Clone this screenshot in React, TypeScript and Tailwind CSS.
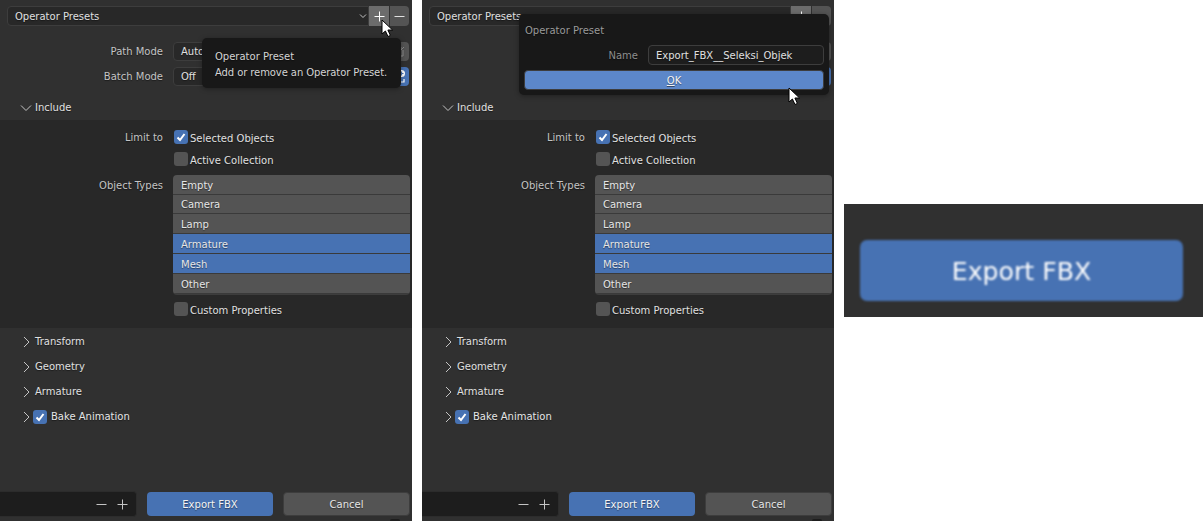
import React from "react";

const objectTypes = [
  { label: "Empty", on: false, cls: "h-[20px] pt-[3px]" },
  { label: "Camera", on: false, cls: "h-[19px] pt-[1px]" },
  { label: "Lamp", on: false, cls: "h-[20px] pt-[3px]" },
  { label: "Armature", on: true, cls: "h-[20px] pt-[3px]" },
  { label: "Mesh", on: true, cls: "h-[20px] pt-[3px]" },
  { label: "Other", on: false, cls: "h-[20px] pt-[3px]" },
];

function Chevron({ down = false, small = false }: { down?: boolean; small?: boolean }) {
  if (small) {
    return (
      <svg width="8" height="6" viewBox="0 0 8 6" fill="none" stroke="#c4c4c4" strokeWidth="1">
        <path d="M1 1.5 L4 4.5 L7 1.5" />
      </svg>
    );
  }
  if (down) {
    return (
      <svg width="12" height="8" viewBox="0 0 12 8" fill="none" stroke="#c4c4c4" strokeWidth="1">
        <path d="M1 1.5 L6 6.5 L11 1.5" />
      </svg>
    );
  }
  return (
    <svg width="7" height="12" viewBox="0 0 7 12" fill="none" stroke="#c4c4c4" strokeWidth="1">
      <path d="M1 1 L6 6 L1 11" />
    </svg>
  );
}

function Check({ on }: { on: boolean }) {
  return (
    <span
      className={`flex h-[14px] w-[14px] shrink-0 items-center justify-center rounded-[3px] ${
        on ? "bg-[#4772b3]" : "bg-[#545454]"
      }`}
    >
      {on && (
        <svg width="12" height="12" viewBox="0 0 12 12" fill="none" stroke="#ffffff" strokeWidth="2">
          <path d="M2.5 6.5 L5 9 L9.5 3" />
        </svg>
      )}
    </span>
  );
}

function Cursor({ className }: { className: string }) {
  return (
    <svg className={className} width="13" height="19" viewBox="0 0 13 19">
      <path d="M1 1 L1 15 L4.4 12 L7 17.5 L9.4 16.4 L6.9 11 L11.6 11 Z" fill="#ffffff" stroke="#000000" strokeWidth="1" />
    </svg>
  );
}

function Sign({ plus = false, color = "#c4c4c4" }: { plus?: boolean; color?: string }) {
  return (
    <svg width="11" height="11" viewBox="0 0 11 11" stroke={color} strokeWidth="1">
      <path d="M0.5 5.5 H10.5" />
      {plus && <path d="M5.5 0.5 V10.5" />}
    </svg>
  );
}

function PropRow({ label, value, children, className }: { label: string; value: string; children: React.ReactNode; className: string }) {
  return (
    <div className={`flex h-[19px] items-center ${className}`}>
      <span className="w-[163px] pt-[1px] text-right text-[#c4c4c4]">{label}</span>
      <div className="ml-[10px] flex h-[19px] w-[212px] items-center rounded-[4px] border border-[#3d3d3d] bg-[#282828] pl-[7px] pt-[1px] text-[#e0e0e0]">
        {value}
      </div>
      {children}
    </div>
  );
}

function CheckRow({ label, on, className }: { label: string; on: boolean; className: string }) {
  return (
    <div className={`flex h-[20px] items-center pl-[174px] ${className}`}>
      <Check on={on} />
      <span className="ml-[2px] pt-[3px] text-[#e0e0e0]">{label}</span>
    </div>
  );
}

function Panel({ overlay }: { overlay: React.ReactNode }) {
  return (
    <div className="relative flex h-[521px] w-[412px] shrink-0 flex-col overflow-hidden bg-[#303030] text-[10px] leading-none [text-shadow:0_1px_1px_rgba(0,0,0,0.45)]">
      <div className="mt-[6px] flex h-[20px] pl-[7px] pr-[3px]">
        <div className="flex w-[362px] items-center justify-between rounded-l-[4px] border border-[#3d3d3d] bg-[#282828] pl-[7px] pr-[1px] text-[#e0e0e0]">
          <span className="pt-[2px]">Operator Presets</span>
          <Chevron small />
        </div>
        <div className="flex w-[20px] items-center justify-center bg-[#6c6c6c]">
          <Sign plus color="#ffffff" />
        </div>
        <div className="ml-[1px] flex w-[19px] items-center justify-center rounded-r-[4px] bg-[#545454]">
          <Sign color="#e0e0e0" />
        </div>
      </div>

      <PropRow label="Path Mode" value="Auto" className="mt-[16px]">
        <div className="ml-[5px] flex h-[19px] w-[19px] items-center justify-center rounded-[4px] bg-[#545454]">
          <svg width="11" height="11" viewBox="0 0 11 11" fill="none" stroke="#8c8c8c" strokeWidth="1">
            <path d="M1 2 H8 M1 2 V10 H9 V4 M3 8 L10 1" />
          </svg>
        </div>
      </PropRow>
      <PropRow label="Batch Mode" value="Off" className="mt-[6px]">
        <div className="ml-[5px] flex h-[19px] w-[19px] items-center justify-center rounded-[4px] bg-[#4772b3]">
          <svg width="15" height="15" viewBox="0 0 15 15" fill="none" stroke="#ffffff" strokeWidth="1.2">
            <path d="M3 6 V13 H12 V10" />
            <circle cx="9.5" cy="4.5" r="3.5" fill="#ffffff" stroke="none" />
            <path d="M7.5 4.5 H11.5 M9.5 2.5 V6.5" stroke="#4772b3" />
          </svg>
        </div>
      </PropRow>

      <div className="mt-[10px] flex h-[24px] items-center">
        <span className="ml-[20px] flex w-[15px]">
          <Chevron down />
        </span>
        <span className="text-[#e0e0e0]">Include</span>
      </div>

      <div className="flex h-[208px] flex-col bg-[#282828] pt-[7px]">
        <div className="relative">
          <span className="absolute right-[249px] top-[6px] text-[#c4c4c4]">Limit to</span>
          <CheckRow label="Selected Objects" on={true} className="" />
        </div>
        <CheckRow label="Active Collection" on={false} className="mt-[2px]" />
        <div className="mt-[6px] flex">
          <span className="mt-[6px] w-[163px] text-right text-[#c4c4c4]">Object Types</span>
          <div className="ml-[10px] flex w-[237px] flex-col overflow-hidden rounded-[4px] border-b border-[#3d3d3d]">
            {objectTypes.map((t) => (
              <div
                key={t.label}
                className={`flex ${t.cls} items-center border-b border-[#3a3a3a] pl-[8px] text-[#e6e6e6] ${
                  t.on ? "bg-[#4772b3]" : "bg-[#545454]"
                }`}
              >
                {t.label}
              </div>
            ))}
          </div>
        </div>
        <CheckRow label="Custom Properties" on={false} className="mt-[4px]" />
      </div>

      <div className="flex flex-col pt-[1px]">
        {["Transform", "Geometry", "Armature"].map((name) => (
          <div key={name} className="flex h-[25px] items-center pl-[23px]">
            <span className="flex w-[12px]">
              <Chevron />
            </span>
            <span className="text-[#e0e0e0]">{name}</span>
          </div>
        ))}
        <div className="flex h-[25px] items-center pl-[23px]">
          <span className="flex w-[10px]">
            <Chevron />
          </span>
          <Check on={true} />
          <span className="ml-[4px] text-[#e6e6e6]">Bake Animation</span>
        </div>
      </div>

      <div className="mb-[4px] mt-auto flex h-[26px]">
        <div className="flex w-[137px] items-center justify-end gap-[10px] rounded-r-[4px] border-y border-r border-[#2c2c2c] bg-[#1d1d1d] pr-[8px]">
          <Sign />
          <Sign plus />
        </div>
        <div className="ml-[10px] mt-[1px] flex h-[24px] w-[126px] items-center justify-center rounded-[4px] bg-[#4772b3] pt-[2px] text-[#f4f4f4]">
          Export FBX
        </div>
        <div className="ml-[10px] mt-[1px] flex h-[24px] w-[127px] items-center justify-center rounded-[4px] border border-[#3d3d3d] bg-[#545454] pt-[2px] text-[#e6e6e6]">
          Cancel
        </div>
      </div>
      <div className="absolute bottom-0 left-[390px] h-[2px] w-[10px] rounded-t-[3px] bg-[#1d1d1d]" />
      {overlay}
    </div>
  );
}

export default function App() {
  return (
    <div className="flex h-[521px] w-[1203px] overflow-hidden bg-white font-['DejaVu_Sans',sans-serif]">
      <Panel
        overlay={
          <>
            <div className="absolute left-[202px] top-[38px] h-[50px] w-[199px] rounded-[5px] bg-[#181818] pl-[13px] pt-[14px] text-[#d4d4d4] shadow-[0_1px_5px_rgba(0,0,0,0.35)]">
              <div>Operator Preset</div>
              <div className="mt-[6px] tracking-[-0.09px]">Add or remove an Operator Preset.</div>
            </div>
            <Cursor className="absolute left-[381px] top-[19px]" />
          </>
        }
      />
      <div className="w-[10px] shrink-0" />
      <Panel
        overlay={
          <>
            <div className="absolute left-[97px] top-[14px] h-[81px] w-[310px] rounded-[5px] bg-[#181818] pl-[6px] pt-[12px] shadow-[0_1px_5px_rgba(0,0,0,0.35)]">
              <div className="text-[#9a9a9a]">Operator Preset</div>
              <div className="mt-[9px] flex h-[20px] items-center">
                <span className="w-[113px] pt-[2px] text-right text-[#8e8e8e]">Name</span>
                <div className="ml-[10px] flex h-[20px] w-[176px] items-center rounded-[4px] border border-[#3d3d3d] bg-[#1d1d1d] pl-[7px] pt-[2px] text-[#e0e0e0]">
                  Export_FBX__Seleksi_Objek
                </div>
              </div>
              <div className="-ml-[1px] mt-[5px] flex h-[20px] w-[300px] items-center justify-center rounded-[4px] border border-[#3d3d3d] bg-[#5c87c9] pt-[2px] text-[#f4f4f4]">
                <span>
                  <span className="underline">O</span>K
                </span>
              </div>
            </div>
            <Cursor className="absolute left-[366px] top-[87px]" />
          </>
        }
      />
      <div className="ml-[10px] mt-[204px] h-[113px] w-[359px] shrink-0 bg-[#303030] pb-[16px] pl-[16px] pr-[20px] pt-[36px]">
        <div className="flex h-full items-center justify-center rounded-[7px] bg-[#4772b3] pt-[2px] text-[25.2px] text-white blur-[0.8px]">
          Export FBX
        </div>
      </div>
    </div>
  );
}
